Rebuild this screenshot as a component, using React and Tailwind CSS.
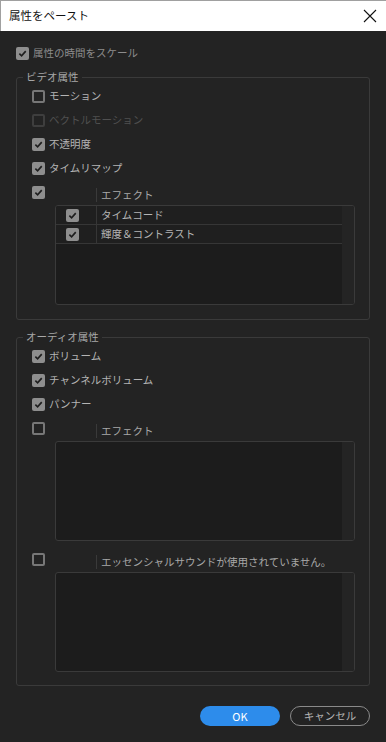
import React from "react";

const font = { fontFamily: '"Noto Sans CJK JP", "Noto Sans", sans-serif' };

const CheckBox = ({ checked, disabled }) => {
  if (checked) {
    return (
      <span className="flex h-[13px] w-[13px] shrink-0 items-center justify-center rounded-[2px] bg-[#8e8e8e]">
        <svg width="9" height="9" viewBox="0 0 10 10">
          <path d="M1.5 5.2 L4 7.6 L8.6 2.4" fill="none" stroke="#1e1e1e" strokeWidth="1.8" />
        </svg>
      </span>
    );
  }
  return (
    <span
      className={`h-[13px] w-[13px] shrink-0 rounded-[2px] border-2 ${
        disabled ? "border-[#3e3e3e]" : "border-[#777777]"
      }`}
    />
  );
};

const Row = ({ label, checked, disabled }) => (
  <div className="flex h-6 items-center gap-[4px] pl-[15px]">
    <CheckBox checked={checked} disabled={disabled} />
    <span className={`text-[10.5px] ${disabled ? "text-[#505050]" : "text-[#b4b4b4]"}`}>{label}</span>
  </div>
);

const HeaderRow = ({ label, checked }) => (
  <div className="flex h-6 items-center pl-[15px]">
    <CheckBox checked={checked} />
    <div className="ml-[51px] mt-[6px] h-[14px] w-px bg-[#3a3a3a]" />
    <span className="ml-1 mt-[6px] text-[10.5px] text-[#a8a8a8]">{label}</span>
  </div>
);

const ListBox = ({ items = [] }) => (
  <div className="ml-[38px] mt-px flex h-[100px] w-[300px] overflow-hidden rounded-[3px] border border-[#3a3a3a] bg-[#1c1c1c]">
    <div className="flex flex-1 flex-col">
      {items.map((it) => (
        <div key={it} className="flex h-[19px] items-center border-b border-[#363636] bg-[#1f1f1f]">
          <div className="flex w-[40px] pl-[10px]">
            <CheckBox checked />
          </div>
          <div className="h-full w-px bg-[#363636]" />
          <span className="ml-1 text-[10.5px] text-[#b4b4b4]">{it}</span>
        </div>
      ))}
    </div>
    <div className="w-[12px] bg-[#242424]" />
  </div>
);

const Group = ({ title, children, className = "" }) => (
  <fieldset className={`mx-4 rounded-[3px] border border-[#3a3a3a] ${className}`}>
    <legend className="ml-[6px] px-[3px] text-[10.5px] leading-[14px] text-[#a8a8a8]">{title}</legend>
    {children}
  </fieldset>
);

export default function App() {
  return (
    <div className="flex h-[742px] w-[386px] flex-col bg-[#232323]" style={font}>
      <div className="flex h-[31px] shrink-0 items-center justify-between border-l border-t border-[#a0a0a0] bg-white pl-2 pr-[9px]">
        <span className="text-[11.5px] text-[#111]">属性をペースト</span>
        <svg width="14" height="14" viewBox="0 0 14 14">
          <path d="M1 1 L13 13 M13 1 L1 13" stroke="#111" strokeWidth="1.1" />
        </svg>
      </div>

      <div className="mt-[14px] flex h-4 items-center gap-[4px] pl-4">
        <CheckBox checked />
        <span className="text-[10.5px] text-[#8c8c8c]">属性の時間をスケール</span>
      </div>

      <Group title="ビデオ属性" className="mt-[9px] pb-[14px]">
        <Row label="モーション" />
        <Row label="ベクトルモーション" disabled />
        <Row label="不透明度" checked />
        <Row label="タイムリマップ" checked />
        <HeaderRow label="エフェクト" checked />
        <ListBox items={["タイムコード", "輝度＆コントラスト"]} />
      </Group>

      <Group title="オーディオ属性" className="mt-[10px] pb-[13px]">
        <Row label="ボリューム" checked />
        <Row label="チャンネルボリューム" checked />
        <Row label="パンナー" checked />
        <HeaderRow label="エフェクト" />
        <ListBox />
        <div className="h-[6px]" />
        <HeaderRow label="エッセンシャルサウンドが使用されていません。" />
        <ListBox />
      </Group>

      <div className="mt-auto mb-[16px] flex justify-end gap-[10px] pr-4">
        <button className="h-[20px] w-[80px] rounded-full bg-[#2d8ceb] text-[11px] text-white">OK</button>
        <button className="h-[20px] w-[80px] rounded-full border border-[#8a8a8a] text-[10.5px] text-[#b4b4b4]">キャンセル</button>
      </div>
    </div>
  );
}
